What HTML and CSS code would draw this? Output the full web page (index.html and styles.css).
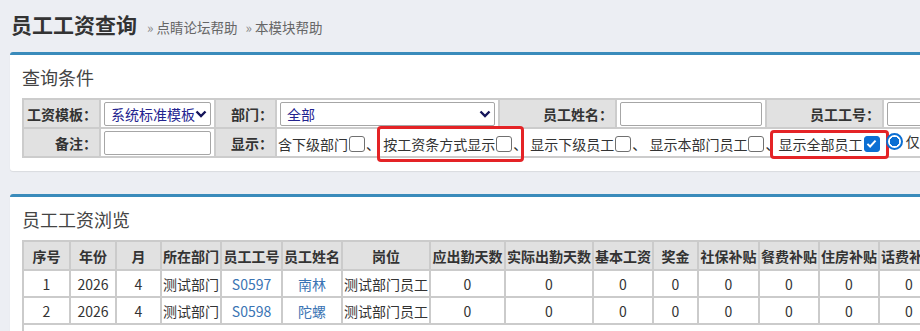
FILE: index.html
```html
<!DOCTYPE html>
<html lang="zh-CN">
<head>
<meta charset="utf-8">
<link rel="stylesheet" href="styles.css">
</head>
<body>
  <div class="page">
    <div class="head">
      <h1>员工工资查询</h1>
      <a class="crumb"><span class="raquo">»</span> 点睛论坛帮助</a>
      <a class="crumb"><span class="raquo">»</span> 本模块帮助</a>
    </div>

    <section class="panel">
      <h2>查询条件</h2>
      <table class="form">
        <colgroup>
          <col style="width:77px"><col style="width:112px"><col style="width:61px"><col style="width:223px">
          <col style="width:117px"><col style="width:150px"><col style="width:117px"><col style="width:200px">
        </colgroup>
        <tr>
          <th>工资模板：</th>
          <td><div class="select">系统标准模板<svg viewBox="0 0 12 8" width="12" height="8"><path d="M1.5 1.5 6 6l4.5-4.5" fill="none" stroke="#14145a" stroke-width="2.4"/></svg></div></td>
          <th>部门：</th>
          <td><div class="select">全部<svg viewBox="0 0 12 8" width="12" height="8"><path d="M1.5 1.5 6 6l4.5-4.5" fill="none" stroke="#14145a" stroke-width="2.4"/></svg></div></td>
          <th>员工姓名：</th>
          <td><div class="input"></div></td>
          <th>员工工号：</th>
          <td><div class="input"></div></td>
        </tr>
        <tr>
          <th>备注：</th>
          <td><div class="input"></div></td>
          <th>显示：</th>
          <td colspan="5" class="opts">
            <span class="opt">含下级部门<span class="cb"></span>、</span>
            <span class="opt mark mark-a">按工资条方式显示<span class="cb"></span>、</span>
            <span class="opt">显示下级员工<span class="cb"></span>、</span>
            <span class="opt">显示本部门员工<span class="cb"></span>、</span>
            <span class="opt mark mark-b">显示全部员工<span class="cb on"><svg viewBox="0 0 16 16" width="13" height="13"><path d="M3 8.5l3.3 3.2L13 4.5" fill="none" stroke="#fff" stroke-width="2.4"/></svg></span></span>
            <span class="opt"><span class="radio"></span>仅在职员工</span>
          </td>
        </tr>
      </table>
    </section>

    <section class="panel">
      <h2>员工工资浏览</h2>
      <table class="grid">
        <colgroup>
          <col style="width:47px"><col style="width:46px"><col style="width:45px"><col style="width:60px">
          <col style="width:61px"><col style="width:60px"><col style="width:87px"><col style="width:75px">
          <col style="width:88px"><col style="width:60px"><col style="width:45px"><col style="width:61px">
          <col style="width:60px"><col style="width:60px"><col style="width:60px"><col style="width:60px">
        </colgroup>
        <tr>
          <th>序号</th><th>年份</th><th>月</th><th>所在部门</th><th>员工工号</th><th>员工姓名</th><th>岗位</th><th>应出勤天数</th>
          <th>实际出勤天数</th><th>基本工资</th><th>奖金</th><th>社保补贴</th><th>餐费补贴</th><th>住房补贴</th><th>话费补贴</th><th>交通补贴</th>
        </tr>
        <tr>
          <td>1</td><td>2026</td><td>4</td><td class="left">测试部门</td><td><a>S0597</a></td><td><a>南林</a></td><td class="left">测试部门员工</td><td>0</td>
          <td>0</td><td>0</td><td>0</td><td>0</td><td>0</td><td>0</td><td>0</td><td>0</td>
        </tr>
        <tr>
          <td>2</td><td>2026</td><td>4</td><td class="left">测试部门</td><td><a>S0598</a></td><td><a>陀螺</a></td><td class="left">测试部门员工</td><td>0</td>
          <td>0</td><td>0</td><td>0</td><td>0</td><td>0</td><td>0</td><td>0</td><td>0</td>
        </tr>
        <tr class="foot"><td colspan="16"></td></tr>
      </table>
    </section>
  </div>
</body>
</html>
```

FILE: styles.css
```css
* {
    box-sizing: border-box;
}
html, body {
    margin: 0;
    overflow: hidden;
}
body {
    background: #eceef3;
    font-family: "Noto Sans CJK SC", "Noto Sans", sans-serif;
    font-size: 14px;
    color: #333;
}
.page {
    width: 1300px;
    padding-left: 10px;
}
.head {
    display: flex;
    align-items: baseline;
    height: 52px;
    padding: 9px 0 0 1px;
}
.head h1 {
    margin: 0;
    font-size: 21px;
    line-height: 30px;
    font-weight: bold;
    color: #333;
}
.crumb {
    margin-left: 10px;
    font-size: 13.5px;
    color: #666;
}
.crumb + .crumb {
    margin-left: 8px;
}
.raquo {
    color: #888;
}
.panel {
    background: #fff;
    border-top: 3px solid #3a8bbb;
    border-radius: 3px;
    padding: 0 12px 13px;
    margin-bottom: 23px;
    box-shadow: 0 1px 1px rgba(0, 0, 0, 0.08);
}
.panel h2 {
    margin: 0;
    padding: 10px 0 9px;
    font-size: 18px;
    line-height: 24px;
    font-weight: normal;
    color: #444;
}
table {
    border-collapse: collapse;
    table-layout: fixed;
}
.form th, .form td {
    border: 2px solid #cccccc;
    height: 29px;
    padding: 0 3px;
    line-height: 20px;
    white-space: nowrap;
    overflow: hidden;
}
.form th {
    background: #e1e1e1;
    text-align: right;
    padding-right: 2px;
    font-weight: bold;
}
.form td.opts {
    overflow: visible;
    padding-left: 1px;
}
.select {
    display: flex;
    align-items: center;
    justify-content: space-between;
    height: 24px;
    padding: 0 3px 0 6px;
    border: 1px solid #a6a6a6;
    border-radius: 2px;
    color: #23238f;
}
.input {
    height: 24px;
    border: 1px solid #a6a6a6;
    border-radius: 2px;
}
.opt {
    display: inline-flex;
    align-items: center;
    position: relative;
}
.cb {
    display: inline-flex;
    align-items: center;
    justify-content: center;
    width: 16px;
    height: 16px;
    margin: 0 1px;
    border: 1.5px solid #707070;
    border-radius: 3px;
    background: #fff;
}
.cb.on {
    background: #0b6fd3;
    border-color: #0b6fd3;
}
.radio {
    display: inline-block;
    width: 17px;
    height: 17px;
    margin: 0 3px 0 2px;
    border: 2px solid #0b6fd3;
    border-radius: 50%;
    background: radial-gradient(circle, #0b6fd3 0 4.5px, #fff 5px);
}
.mark::after {
    content: "";
    position: absolute;
    border: 3px solid #e42326;
    border-radius: 4px;
}
.mark-a::after {
    left: -6px;
    right: 3px;
    top: -8px;
    bottom: -8px;
}
.mark-b {
    margin-left: -4px;
}
.mark-b::after {
    left: -9px;
    right: -8px;
    top: -4px;
    bottom: -5px;
}
.grid th, .grid td {
    border: 2px solid #cbcbcb;
    text-align: center;
    white-space: nowrap;
    overflow: hidden;
    line-height: 20px;
    padding: 0 1px;
}
.grid th {
    background: #e1e1e1;
    height: 29px;
    font-weight: bold;
}
.grid td {
    height: 27px;
}
.grid td.left {
    text-align: left;
}
.grid a {
    color: #3a74b4;
}
.grid .foot td {
    height: 30px;
}
```
